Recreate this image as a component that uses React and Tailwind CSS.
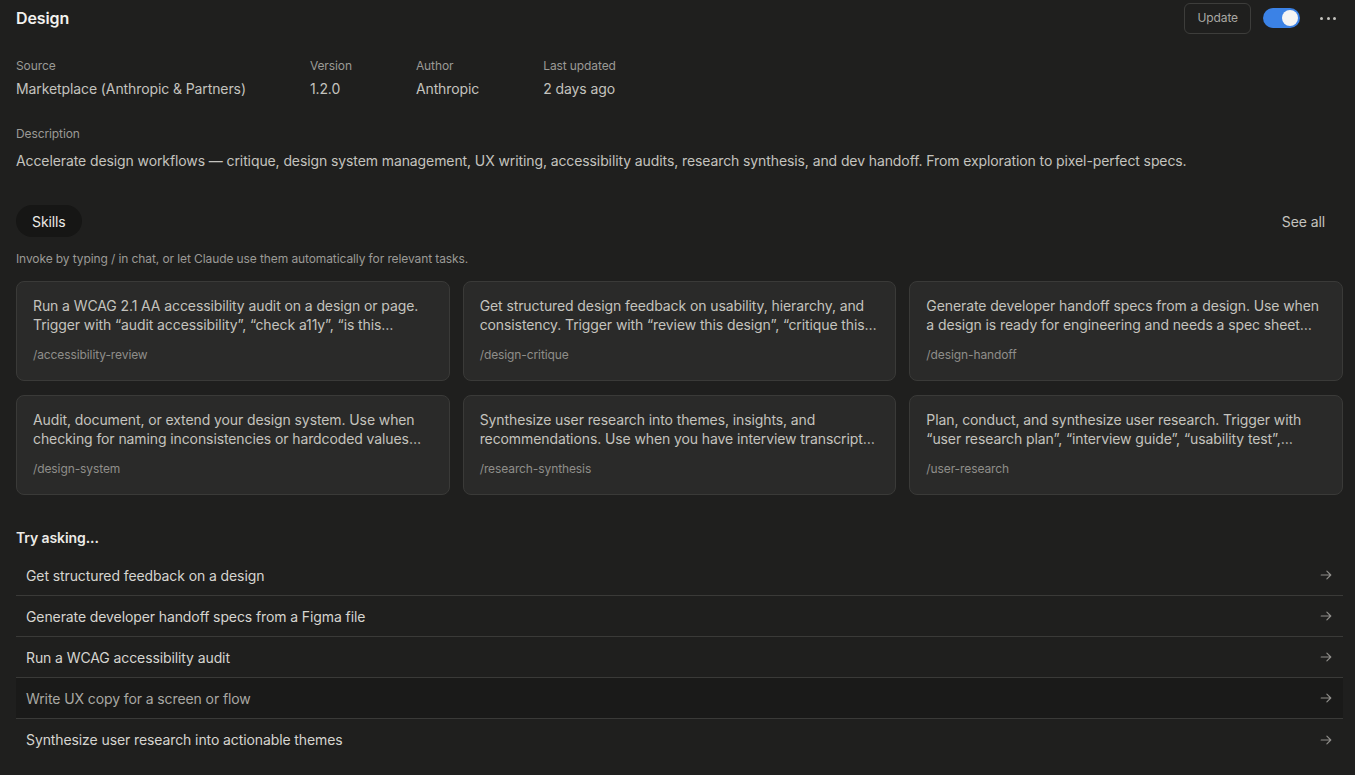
import React from "react";

const skills = [
  {
    l1: "Run a WCAG 2.1 AA accessibility audit on a design or page.",
    l2: "Trigger with \u201caudit accessibility\u201d, \u201ccheck a11y\u201d, \u201cis this\u2026",
    slug: "/accessibility-review",
  },
  {
    l1: "Get structured design feedback on usability, hierarchy, and",
    l2: "consistency. Trigger with \u201creview this design\u201d, \u201ccritique this\u2026",
    slug: "/design-critique",
  },
  {
    l1: "Generate developer handoff specs from a design. Use when",
    l2: "a design is ready for engineering and needs a spec sheet\u2026",
    slug: "/design-handoff",
  },
  {
    l1: "Audit, document, or extend your design system. Use when",
    l2: "checking for naming inconsistencies or hardcoded values\u2026",
    slug: "/design-system",
  },
  {
    l1: "Synthesize user research into themes, insights, and",
    l2: "recommendations. Use when you have interview transcript\u2026",
    slug: "/research-synthesis",
  },
  {
    l1: "Plan, conduct, and synthesize user research. Trigger with",
    l2: "\u201cuser research plan\u201d, \u201cinterview guide\u201d, \u201cusability test\u201d,\u2026",
    slug: "/user-research",
  },
];

const prompts = [
  "Get structured feedback on a design",
  "Generate developer handoff specs from a Figma file",
  "Run a WCAG accessibility audit",
  "Write UX copy for a screen or flow",
  "Synthesize user research into actionable themes",
];

function Arrow() {
  return (
    <svg width="14" height="14" viewBox="0 0 16 16" fill="none" stroke="currentColor" strokeWidth="1.3" strokeLinecap="round" strokeLinejoin="round">
      <path d="M2.5 8h11M9 3.5 13.5 8 9 12.5" />
    </svg>
  );
}

function Meta({ label, value }) {
  return (
    <div className="flex flex-col">
      <span className="text-[12px] leading-4 text-[#9b9a96]">{label}</span>
      <span className="mt-[5px] text-[14px] leading-5 text-[#c4c3be]">{value}</span>
    </div>
  );
}

export default function App() {
  return (
    <div
      className="min-h-[775px] w-full bg-[#1f1f1e] pl-4 pr-3 tracking-[-0.1px] text-[#c4c3be]"
      style={{ fontFamily: "Inter, 'Noto Sans', sans-serif" }}
    >
      <div className="flex h-[36px] items-center justify-between">
        <h1 className="text-[16px] font-semibold text-[#f2f1ee]">Design</h1>
        <div className="flex items-center">
          <button className="h-[31px] rounded-[6px] border border-[#3d3d3b] px-[12px] text-[12px] text-[#a9a8a3]">
            Update
          </button>
          <div className="ml-[12px] flex h-[20px] w-[37px] items-center justify-end rounded-full bg-[#3b82e6] px-[2px]">
            <div className="h-[16px] w-[16px] rounded-full bg-[#f4f4f4]" />
          </div>
          <div className="ml-[20px] flex w-[16px] items-center justify-between">
            <span className="h-[3px] w-[3px] rounded-full bg-[#c4c3be]" />
            <span className="h-[3px] w-[3px] rounded-full bg-[#c4c3be]" />
            <span className="h-[3px] w-[3px] rounded-full bg-[#c4c3be]" />
          </div>
          <div className="w-[7px]" />
        </div>
      </div>

      <div className="mt-[22px] flex gap-[64px]">
        <Meta label="Source" value="Marketplace (Anthropic & Partners)" />
        <Meta label="Version" value="1.2.0" />
        <Meta label="Author" value="Anthropic" />
        <Meta label="Last updated" value="2 days ago" />
      </div>

      <div className="mt-[27px]">
        <div className="text-[12px] leading-4 text-[#9b9a96]">Description</div>
        <p className="mt-[9px] text-[14px] leading-5 text-[#c4c3be]">
          Accelerate design workflows — critique, design system management, UX writing, accessibility audits, research synthesis, and dev handoff. From exploration to pixel-perfect specs.
        </p>
      </div>

      <div className="mt-[34px] flex items-center justify-between">
        <div className="flex h-[32px] items-center rounded-full bg-[#161615] px-[16px] text-[14px] text-[#ecebe7]">
          Skills
        </div>
        <span className="mr-[18px] text-[14px] text-[#c4c3be]">See all</span>
      </div>

      <p className="mt-[14px] text-[12px] leading-4 text-[#9b9a96]">
        Invoke by typing / in chat, or let Claude use them automatically for relevant tasks.
      </p>

      <div className="mt-[14px] grid grid-cols-3 gap-x-[13px] gap-y-[14px]">
        {skills.map((s) => (
          <div
            key={s.slug}
            className="h-[100px] rounded-[8px] border border-[#3a3a38] bg-[#2a2a29] px-[16px] pt-[14px]"
          >
            <p className="whitespace-nowrap text-[14px] leading-[19px] text-[#c4c3be]">{s.l1}</p>
            <p className="whitespace-nowrap text-[14px] leading-[19px] text-[#c4c3be]">{s.l2}</p>
            <p className="mt-[13px] text-[12px] leading-4 text-[#8f8e8a]">{s.slug}</p>
          </div>
        ))}
      </div>

      <h2 className="mt-[33px] text-[14px] font-semibold leading-5 text-[#ecebe7]">Try asking...</h2>

      <div className="mt-[7px] flex flex-col">
        {prompts.map((p, i) => (
          <div
            key={p}
            className={
              "flex h-[41px] items-center justify-between px-[10px] text-[14px] " +
              (i < prompts.length - 1 ? "border-b border-[#3a3a38] " : "") +
              (i === 3 ? "bg-[#1a1a19] text-[#a9a8a3]" : "text-[#d6d5d0]")
            }
          >
            <span>{p}</span>
            <span className="text-[#8f8e8a]">
              <Arrow />
            </span>
          </div>
        ))}
      </div>
    </div>
  );
}
